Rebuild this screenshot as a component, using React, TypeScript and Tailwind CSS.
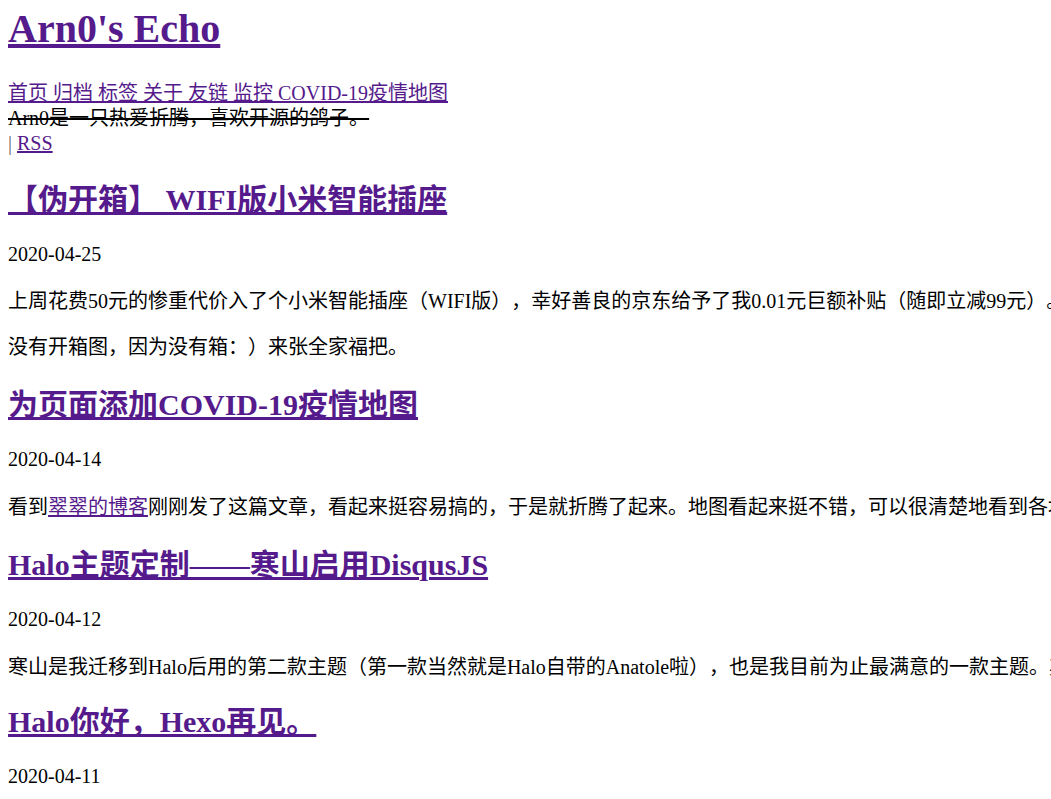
import React from "react";

const link = "text-[#551a8b] underline";

type Post = {
  title: string;
  date: string;
  body: { node: React.ReactNode; mt: string }[];
  mt: string;
};

const posts: Post[] = [
  {
    title: "【伪开箱】 WIFI版小米智能插座",
    date: "2020-04-25",
    body: [
      {
        node: "上周花费50元的惨重代价入了个小米智能插座（WIFI版），幸好善良的京东给予了我0.01元巨额补贴（随即立减99元）。",
        mt: "mt-[22px]",
      },
      { node: "没有开箱图，因为没有箱：）来张全家福把。", mt: "mt-[21px]" },
    ],
    mt: "mt-[26px]",
  },
  {
    title: "为页面添加COVID-19疫情地图",
    date: "2020-04-14",
    body: [
      {
        node: (
          <>
            看到
            <a href="#" className={link}>
              翠翠的博客
            </a>
            刚刚发了这篇文章，看起来挺容易搞的，于是就折腾了起来。地图看起来挺不错，可以很清楚地看到各地的疫情情况。
          </>
        ),
        mt: "mt-[23px]",
      },
    ],
    mt: "mt-[27px]",
  },
  {
    title: "Halo主题定制——寒山启用DisqusJS",
    date: "2020-04-12",
    body: [
      {
        node: "寒山是我迁移到Halo后用的第二款主题（第一款当然就是Halo自带的Anatole啦），也是我目前为止最满意的一款主题。其",
        mt: "mt-[23px]",
      },
    ],
    mt: "mt-[27px]",
  },
  {
    title: "Halo你好，Hexo再见。",
    date: "2020-04-11",
    body: [],
    mt: "mt-[24px]",
  },
];

export default function App() {
  return (
    <div className="h-screen w-full overflow-hidden bg-white text-black font-['Liberation_Serif','Noto_Sans_CJK_SC',serif] [text-spacing-trim:space-all]">
      <div className="px-2 pt-[7px] whitespace-nowrap">
        <h1 className="text-[40px] leading-[44px] font-bold">
          <a href="#" className={link}>
            Arn0's Echo
          </a>
        </h1>
        <nav className="mt-[30px] text-[20px] leading-[25px]">
          <a href="#" className={link}>首页 </a>
          <a href="#" className={link}>归档 </a>
          <a href="#" className={link}>标签 </a>
          <a href="#" className={link}>关于 </a>
          <a href="#" className={link}>友链 </a>
          <a href="#" className={link}>监控 </a>
          <a href="#" className={link}>COVID-19疫情地图</a>
        </nav>
        <div className="text-[20px] leading-[25px]">
          <span className="line-through">Arn0是一只热爱折腾，喜欢开源的鸽子。</span>
        </div>
        <div className="text-[20px] leading-[25px]">
          <span className="text-[#666]">|</span> <a href="#" className={link}>RSS</a>
        </div>

        {posts.map((p) => (
          <article key={p.date}>
            <h2 className={`${p.mt} text-[30px] leading-[36px] font-bold`}>
              <a href="#" className={link}>
                {p.title}
              </a>
            </h2>
            <p className="mt-[24px] text-[20px] leading-[25px]">{p.date}</p>
            {p.body.map((b, i) => (
              <p key={i} className={`${b.mt} text-[20px] leading-[25px]`}>
                {b.node}
              </p>
            ))}
          </article>
        ))}
      </div>
    </div>
  );
}
